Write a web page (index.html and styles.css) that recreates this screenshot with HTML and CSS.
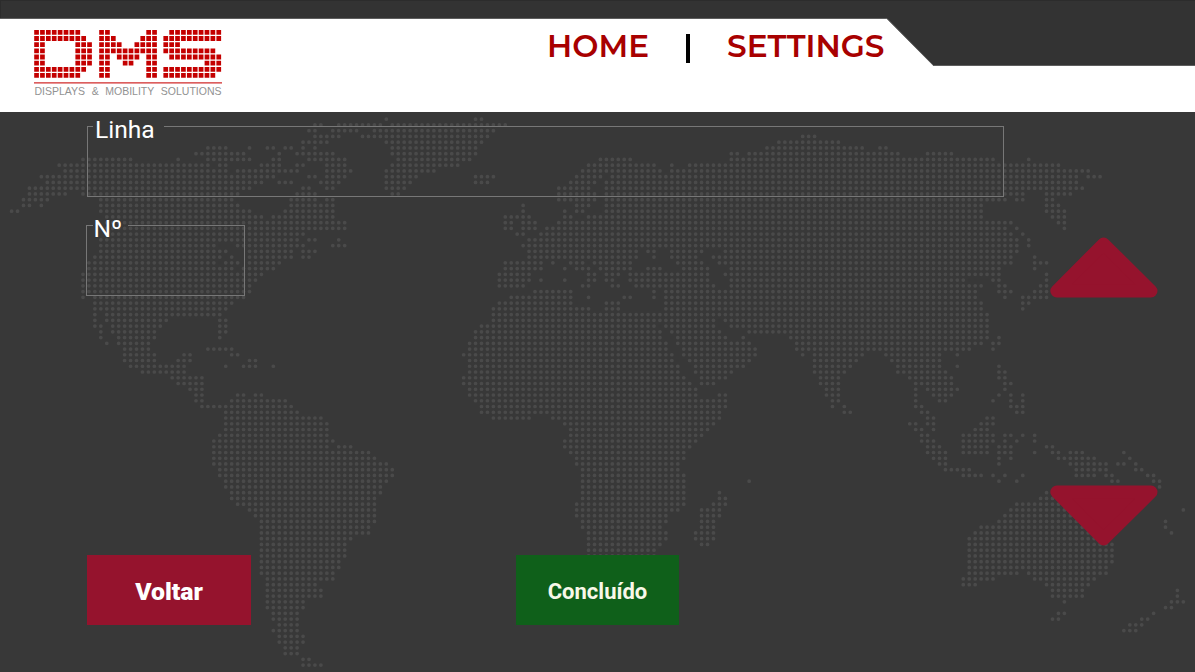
FILE: index.html
```html
<!DOCTYPE html>
<html lang="pt">
<head>
<meta charset="utf-8">
<title>DMS</title>
<link rel="stylesheet" href="styles.css">
</head>
<body>
<header class="header">
  <svg class="header-shape" width="1195" height="112" aria-hidden="true">
    <rect class="shape-dark" width="1195" height="112"/>
    <path class="shape-edge" d="M0 .5H1195M.5 0V18"/>
    <path class="shape-light" d="M0 19H887L933.5 66H1195V112H0Z"/>
    <path class="shape-line" d="M0 18.5H887L933.5 65.5H1195"/>
  </svg>
  <div class="brand">
    <svg class="brand-mark" width="188" height="54" aria-label="DMS">
      <g class="brand-cells">
        <path d="M.2 2.4h46.6M.2 8.5h52.5M.2 14.6h11M41.4 14.6h17M.2 20.8h11M41.4 20.8h17M.2 27h11M41.4 27h17M.2 33.1h11M41.4 33.1h17M.2 39.3h52.5M.2 45.4h46.6"/>
        <path d="M65.2 2.4h11M112.3 2.4h11M65.2 8.5h17M106.4 8.5h17M65.2 14.6h23M100.5 14.6h23M65.2 20.8h58M65.2 27h11M82.9 27h22.6M112.3 27h11M65.2 33.1h11M88.8 33.1h11M112.3 33.1h11M65.2 39.3h11M112.3 39.3h11M65.2 45.4h11M112.3 45.4h11"/>
        <path d="M135.3 2.4h52.2M129.4 8.5h58.1M129.4 14.6h17M129.4 20.8h52.3M135.3 27h52.2M170.6 33.1h17M129.4 39.3h58.1M129.4 45.4h52.3"/>
      </g>
      <path class="brand-rule" d="M0 52.9H188"/>
    </svg>
    <div class="brand-tag"><span>DISPLAYS</span><span>&amp;</span><span>MOBILITY</span><span>SOLUTIONS</span></div>
  </div>
  <nav class="nav">
    <svg class="nav-link" width="110" height="50"><text x="3" y="35" textLength="102" lengthAdjust="spacingAndGlyphs">HOME</text></svg>
    <span class="nav-sep"></span>
    <svg class="nav-link" width="168" height="50"><text x="4" y="35" textLength="157.5" lengthAdjust="spacingAndGlyphs">SETTINGS</text></svg>
  </nav>
</header>
<main class="main">
  <svg class="map" width="1195" height="560" aria-hidden="true"><path id="map-dots" transform="translate(11.6 7.2) scale(5.948 5.746)"/></svg>
  <div class="form">
    <fieldset class="field field-line"><legend>Linha</legend></fieldset>
    <fieldset class="field field-number"><legend>Nº</legend></fieldset>
    <div class="actions">
      <button class="btn btn-back">Voltar</button>
      <button class="btn btn-done">Concluído</button>
    </div>
  </div>
  <div class="arrows">
    <svg class="arrow" width="108" height="61"><path d="M6.8 54H101L53.6 7Z"/></svg>
    <svg class="arrow" width="108" height="61"><path d="M6.8 7H101L53.6 54Z"/></svg>
  </div>
</main>
<script src="map.js"></script>
</body>
</html>
```
FILE: styles.css
```css
* { box-sizing: border-box; }
body {
  margin: 0;
  width: 1195px;
  height: 672px;
  overflow: hidden;
  background: #383838;
  font-family: Roboto, sans-serif;
  display: flex;
  flex-direction: column;
}
.header {
  position: relative;
  height: 112px;
  flex: none;
  display: flex;
  align-items: flex-start;
}
.header-shape { position: absolute; inset: 0; }
.shape-dark { fill: #333; }
.shape-edge { fill: none; stroke: #2c2c2c; }
.shape-light { fill: #fff; }
.shape-line { fill: none; stroke: #6a6a6a; stroke-width: 0.8; }
.brand { position: relative; width: 188px; margin: 30px 0 0 34px; }
.brand-mark { display: block; }
.brand-cells path { fill: none; stroke: #c40000; stroke-width: 4.8; stroke-dasharray: 4.7 1.19; }
.brand-rule { stroke: #d02a2a; stroke-width: 1.3; }
.brand-tag {
  display: flex;
  justify-content: space-between;
  padding: 0 0.5px;
  font: 10.5px/15px "Liberation Sans", Arial, sans-serif;
  color: #929292;
}
.nav { position: relative; display: flex; align-items: flex-start; margin: 22px 0 0 322px; }
.nav-link { display: block; }
.nav-link text { font: 600 30.5px Montserrat, Lato, sans-serif; fill: #a80000; }
.nav-sep { width: 4px; height: 29px; background: #000; margin: 12px 33px 0 32px; }
.main { position: relative; flex: 1; display: flex; }
.map { position: absolute; inset: 0; }
.map path { fill: none; stroke: #4a4a4a; stroke-width: 0.64; stroke-linecap: round; stroke-dasharray: 0 1; }
.form { position: relative; width: 917px; margin: 3px 0 0 87px; display: flex; flex-direction: column; }
.field { margin: 0; padding: 0; border: 1px solid #777; min-width: 0; }
.field legend {
  margin-left: 5px;
  padding: 8px 9px 0 2px;
  font-size: 24.6px;
  line-height: 14px;
  color: #fff;
}
.field-line { width: 917px; height: 82px; }
.field-number { width: 159px; height: 82px; margin: 17px 0 0 -1px; }
.field-number legend { margin-left: 6px; padding-left: 0.5px; padding-right: 6px; }
.actions { display: flex; gap: 265px; margin: 259px 0 0 0; }
.btn {
  width: 164px;
  height: 70px;
  border: 0;
  padding: 2px 0 0;
  color: #fff;
  font-family: Roboto, sans-serif;
  font-weight: 700;
}
.btn-back { background: #95132d; font-size: 24.8px; font-weight: 900; }
.btn-done { width: 163px; background: #0f601a; font-size: 22px; color: #f8f8e8; }
.arrows {
  position: relative;
  display: flex;
  flex-direction: column;
  gap: 187px;
  margin: 125px 0 0 46px;
}
.arrow path { fill: #95132d; stroke: #95132d; stroke-width: 13; stroke-linejoin: round; }
```
FILE: map.js
```js
// Land dots of the world map: one entry per grid row, each a list of column runs.
const rows = `63 78-79
51-52 55-62 64-83
50-51 54-58 61-81
51-55 59-80 133-135
49-53 63-79 129-139
33-36 40 43-44 46-47 49 51 64-78 127-143 146-147
31-39 45 48-54 64-78 121-122 124-149 154-158
12-20 28 33-40 44-45 50-56 65-77 99-104 121-165 171
8-33 35-36 42-45 48-49 53-56 64-75 97-108 111 114-176
9-36 38-48 53-57 63-71 96-109 111-181
5-44 50-51 53-56 63-68 78-81 95-99 101-179 181-183
6-42 45-47 52-55 63-67 78-80 94-98 100-179
3-40 49-50 53-54 63-66 92-97 100-180
3-9 12-38 48-51 64-65 92-98 100-170 174-178
2-6 15-37 47-51 53-54 92-98 100-167 169-170 174-175
2-3 5 15-38 47-54 86 95-97 100-163 174-176
0-1 15-40 46-54 86 93 95-96 100-163 174-177
16-42 44-54 83-87 93-94 97-163 175-177
16-56 83-84 86-88 92-168 176-177
16-56 83-84 86-88 90-167 169 177
16-49 85-86 89-168 170
15-48 50-51 55 87-169 171
15-34 38-49 54-56 86-169 171
15-36 40-47 49-51 87-105 107-108 111-116 120-169
14-35 37 40-47 49-50 87-105 108 111-115 118-168 172
13-34 36-38 40-45 83-89 91 94-96 98-104 112-116 119-168 172-174
13-37 39-44 83-89 93 95-97 99-104 107-109 113-117 121-166 172
12-42 82-87 97-98 100-102 104-117 120-166 174
12-41 82-87 89 93 97-98 100-101 104-117 121-160 165-166 174
12-40 82-86 96-97 101-102 105-118 121-163 166-167 173-174
12-40 88-94 108 110-162 166-168 172-174
12 14-39 84-94 97 103-104 108 110-162 167 170-174
14-37 82-94 100-102 110-163 170-171
14-36 81-97 100-102 110-163 170
14 16-35 81-164
14 16-26 35-36 81-118 120-164
14-15 17-25 35-36 79-108 110-118 121-164
15 17-24 35-36 78-109 111-119 124-164
15 18-24 35 78-109 112-120 123 131-164 166
16 18-23 77-110 112-124 132-163 165-166
19-23 33-37 77-110 113-125 132-161 165
19-24 29-30 37-38 76-111 113-125 133 135-143 147-156 159
19-24 28-30 40-41 77-111 114-124 135-142 148-156
20-29 36 39-41 44 77-112 115-123 135-141 149-156 159 166
22-29 77-112 115-121 135-140 149-157 166-167
27-32 76-113 116-120 136-139 151-158 166-167
28-32 76-114 116-118 136-139 152-158 167-168
30-32 77-115 137-139 152 154-159 167
31-32 38-39 41-42 77-115 119-120 137-139 152 155-158 166 168 170
31-32 37-46 78-120 138-139 152 156-157 165 168 170
32-47 79-120 138 140 152-153 168-170
36-48 79-119 140-141 153-154 169-170
36-52 81-87 91-119 154-155 164-165
36-53 93-118 151-152 154-155 163-165
36-53 94-117 152-153 155 162-164
35-53 94-116 153-154 160-165 167-168 170 172
34-54 93-115 153-155 160-165 167 169 172
34-53 55-57 93-114 154-156 160-164 166-168 174-175
34-60 94-113 154-157 160-164 166-168 172 175-176 178-180 187
34-61 95-113 155-157 166 168 176-182 188
34-63 95-112 156-157 166 178-184 186-187 189
35-64 96-112 157-161 179-184 189-190
35-64 96-113 160-163 165 167 170 179-182 184-185 191-192
36-63 96-113 124 166 169 185-186 192-193
36-62 96-113 193
37-62 96-113 119 174-175
37-61 96-113 119-120 173-176
38-61 95-113 118-120 169-178
40-61 95-112 116-119 168-178 197
41-61 95-110 116-119 167-180
42-61 96-110 116-118 166-180 194
42-60 96-109 116-118 163-182 194
42-60 97-110 115-118 162-182 195
42-57 97-110 115-118 161-183
42-56 97-109 116-117 161-185
42-56 97-108 161-185
42-56 97-108 161-185
42-55 161-185
42-55 161-184
42-54 161-169 171-184
43-54 160-165 172-182
43-51 160-162 174-181
43-52 175-180 196
43-52 175-180 196
43-49 177 195-197
43-49 194-195
44-48 176-177 192
44-48 175-176 190-191
45-48 188-190
44-48 187-189
45-49
45-49
46-48
46-48
49-50
49-52`.split("\n");

// Each run becomes a subpath; the round-capped zero-length dashes draw its dots.
const d = rows.map((row, y) => row.split(" ").map(run => {
  const [a, b = a] = run.split("-").map(Number);
  return `M${a} ${y}h${b - a + 0.05}`;
}).join("")).join("");
document.getElementById("map-dots").setAttribute("d", d);
```
